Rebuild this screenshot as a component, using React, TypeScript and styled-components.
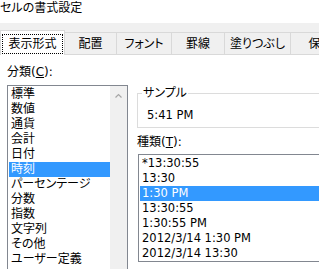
import React from "react";
import styled, { createGlobalStyle } from "styled-components";

const Global = createGlobalStyle`
  html, body { margin: 0; padding: 0; background: #fff; overflow: hidden; }
  body {
    font-family: "DejaVu Sans", "Noto Sans CJK JP", sans-serif;
    font-size: 12px;
    color: #000;
    font-feature-settings: "palt";
  }
`;

const Window = styled.div`
  width: 319px;
  height: 269px;
  display: flex;
  flex-direction: column;
  overflow: hidden;
`;

const TitleBar = styled.div`
  flex: none;
  height: 23px;
  box-sizing: border-box;
  padding-top: 1px;
  line-height: 15px;
  white-space: nowrap;
`;

const TabStrip = styled.div`
  flex: none;
  height: 32px;
  background: #f0f0f0;
  display: flex;
  align-items: flex-end;
  white-space: nowrap;
`;

const Tab = styled.div<{ $w: number; $active?: boolean }>`
  flex: none;
  width: ${(p) => p.$w}px;
  box-sizing: border-box;
  height: ${(p) => (p.$active ? 25 : 23)}px;
  background: ${(p) => (p.$active ? "#fff" : "#f0f0f0")};
  border-top: 1px solid #d9d9d9;
  border-right: 1px solid #d9d9d9;
  border-left: ${(p) => (p.$active ? "1px solid #d9d9d9" : "none")};
  border-bottom: ${(p) => (p.$active ? "none" : "1px solid #d9d9d9")};
  display: flex;
  align-items: stretch;
  justify-content: center;
  padding: ${(p) => (p.$active ? "3px 1px 1px 1px" : "1px 0 0 0")};
`;

const TabLabel = styled.span<{ $focus?: boolean }>`
  flex: 1;
  display: flex;
  align-items: center;
  justify-content: center;
  border: 1px dotted ${(p) => (p.$focus ? "#000" : "transparent")};
  line-height: 15px;
`;

const Page = styled.div`
  flex: 1;
  min-height: 0;
  overflow: hidden;
  display: grid;
  grid-template-columns: 121px 200px;
  column-gap: 9px;
  align-items: start;
  padding-left: 7px;
`;

const LeftColumn = styled.div`
  padding-top: 10px;
  display: flex;
  flex-direction: column;
`;

const RightColumn = styled.div`
  margin-top: 31px;
  display: flex;
  flex-direction: column;
`;

const Label = styled.div<{ $gap?: number }>`
  line-height: 15px;
  margin-top: ${(p) => p.$gap ?? 0}px;
  white-space: nowrap;
`;

const ListBox = styled.div<{ $height: number; $indent?: number; $top: number; $size?: number }>`
  box-sizing: border-box;
  flex: none;
  height: ${(p) => p.$height}px;
  margin-left: ${(p) => p.$indent ?? 0}px;
  margin-top: ${(p) => p.$top}px;
  border: 1px solid #828790;
  display: flex;
  background: #fff;
  font-size: ${(p) => p.$size ?? 12}px;
`;

const Items = styled.div`
  flex: 1;
  padding-top: 1px;
  display: flex;
  flex-direction: column;
`;

const Item = styled.div<{ $selected?: boolean }>`
  flex: none;
  height: 15px;
  line-height: 15px;
  margin-left: 1px;
  padding-left: 2px;
  white-space: nowrap;
  background: ${(p) => (p.$selected ? "#3399ff" : "transparent")};
  color: ${(p) => (p.$selected ? "#fff" : "#000")};
`;

const ScrollBar = styled.div`
  width: 17px;
  flex: none;
  background: #f0f0f0;
  display: flex;
  justify-content: center;
  align-items: flex-start;
  padding-top: 7px;
  box-sizing: border-box;
`;

const Group = styled.fieldset`
  margin: 0;
  border: 1px solid #dcdcdc;
  padding: 7px 0 4px 9px;
  min-width: 0;
`;

const Legend = styled.legend`
  padding: 0 1px;
  margin-left: -5px;
  line-height: 15px;
`;

const Sample = styled.div`
  line-height: 15px;
  font-size: 11.5px;
`;

const UpArrow = () => (
  <svg width="7" height="5" viewBox="0 0 7 5">
    <polyline points="0.5,4.5 3.5,1.5 6.5,4.5" fill="none" stroke="#a6a6a6" strokeWidth="1.2" />
  </svg>
);

const categories = [
  "標準",
  "数値",
  "通貨",
  "会計",
  "日付",
  "時刻",
  "パーセンテージ",
  "分数",
  "指数",
  "文字列",
  "その他",
  "ユーザー定義",
];

const formats = [
  "*13:30:55",
  "13:30",
  "1:30 PM",
  "13:30:55",
  "1:30:55 PM",
  "2012/3/14 1:30 PM",
  "2012/3/14 13:30",
];

const tabs: { label: string; w: number }[] = [
  { label: "表示形式", w: 65 },
  { label: "配置", w: 52 },
  { label: "フォント", w: 55 },
  { label: "罫線", w: 53 },
  { label: "塗りつぶし", w: 66 },
  { label: "保護", w: 60 },
];

export default function App() {
  return (
    <Window>
      <Global />
      <TitleBar>セルの書式設定</TitleBar>
      <TabStrip>
        {tabs.map((t, i) => (
          <Tab key={t.label} $w={t.w} $active={i === 0}>
            <TabLabel $focus={i === 0}>{t.label}</TabLabel>
          </Tab>
        ))}
      </TabStrip>
      <Page>
        <LeftColumn>
          <Label>
            分類(<u>C</u>):
          </Label>
          <ListBox $height={200} $top={5}>
            <Items>
              {categories.map((c) => (
                <Item key={c} $selected={c === "時刻"}>
                  {c}
                </Item>
              ))}
            </Items>
            <ScrollBar>
              <UpArrow />
            </ScrollBar>
          </ListBox>
        </LeftColumn>
        <RightColumn>
          <Group>
            <Legend>サンプル</Legend>
            <Sample>5:41 PM</Sample>
          </Group>
          <Label $gap={7}>
            種類(<u>T</u>):
          </Label>
          <ListBox $height={108} $indent={1} $top={4} $size={11.5}>
            <Items>
              {formats.map((f, i) => (
                <Item key={i} $selected={i === 2}>
                  {f}
                </Item>
              ))}
            </Items>
          </ListBox>
        </RightColumn>
      </Page>
    </Window>
  );
}
